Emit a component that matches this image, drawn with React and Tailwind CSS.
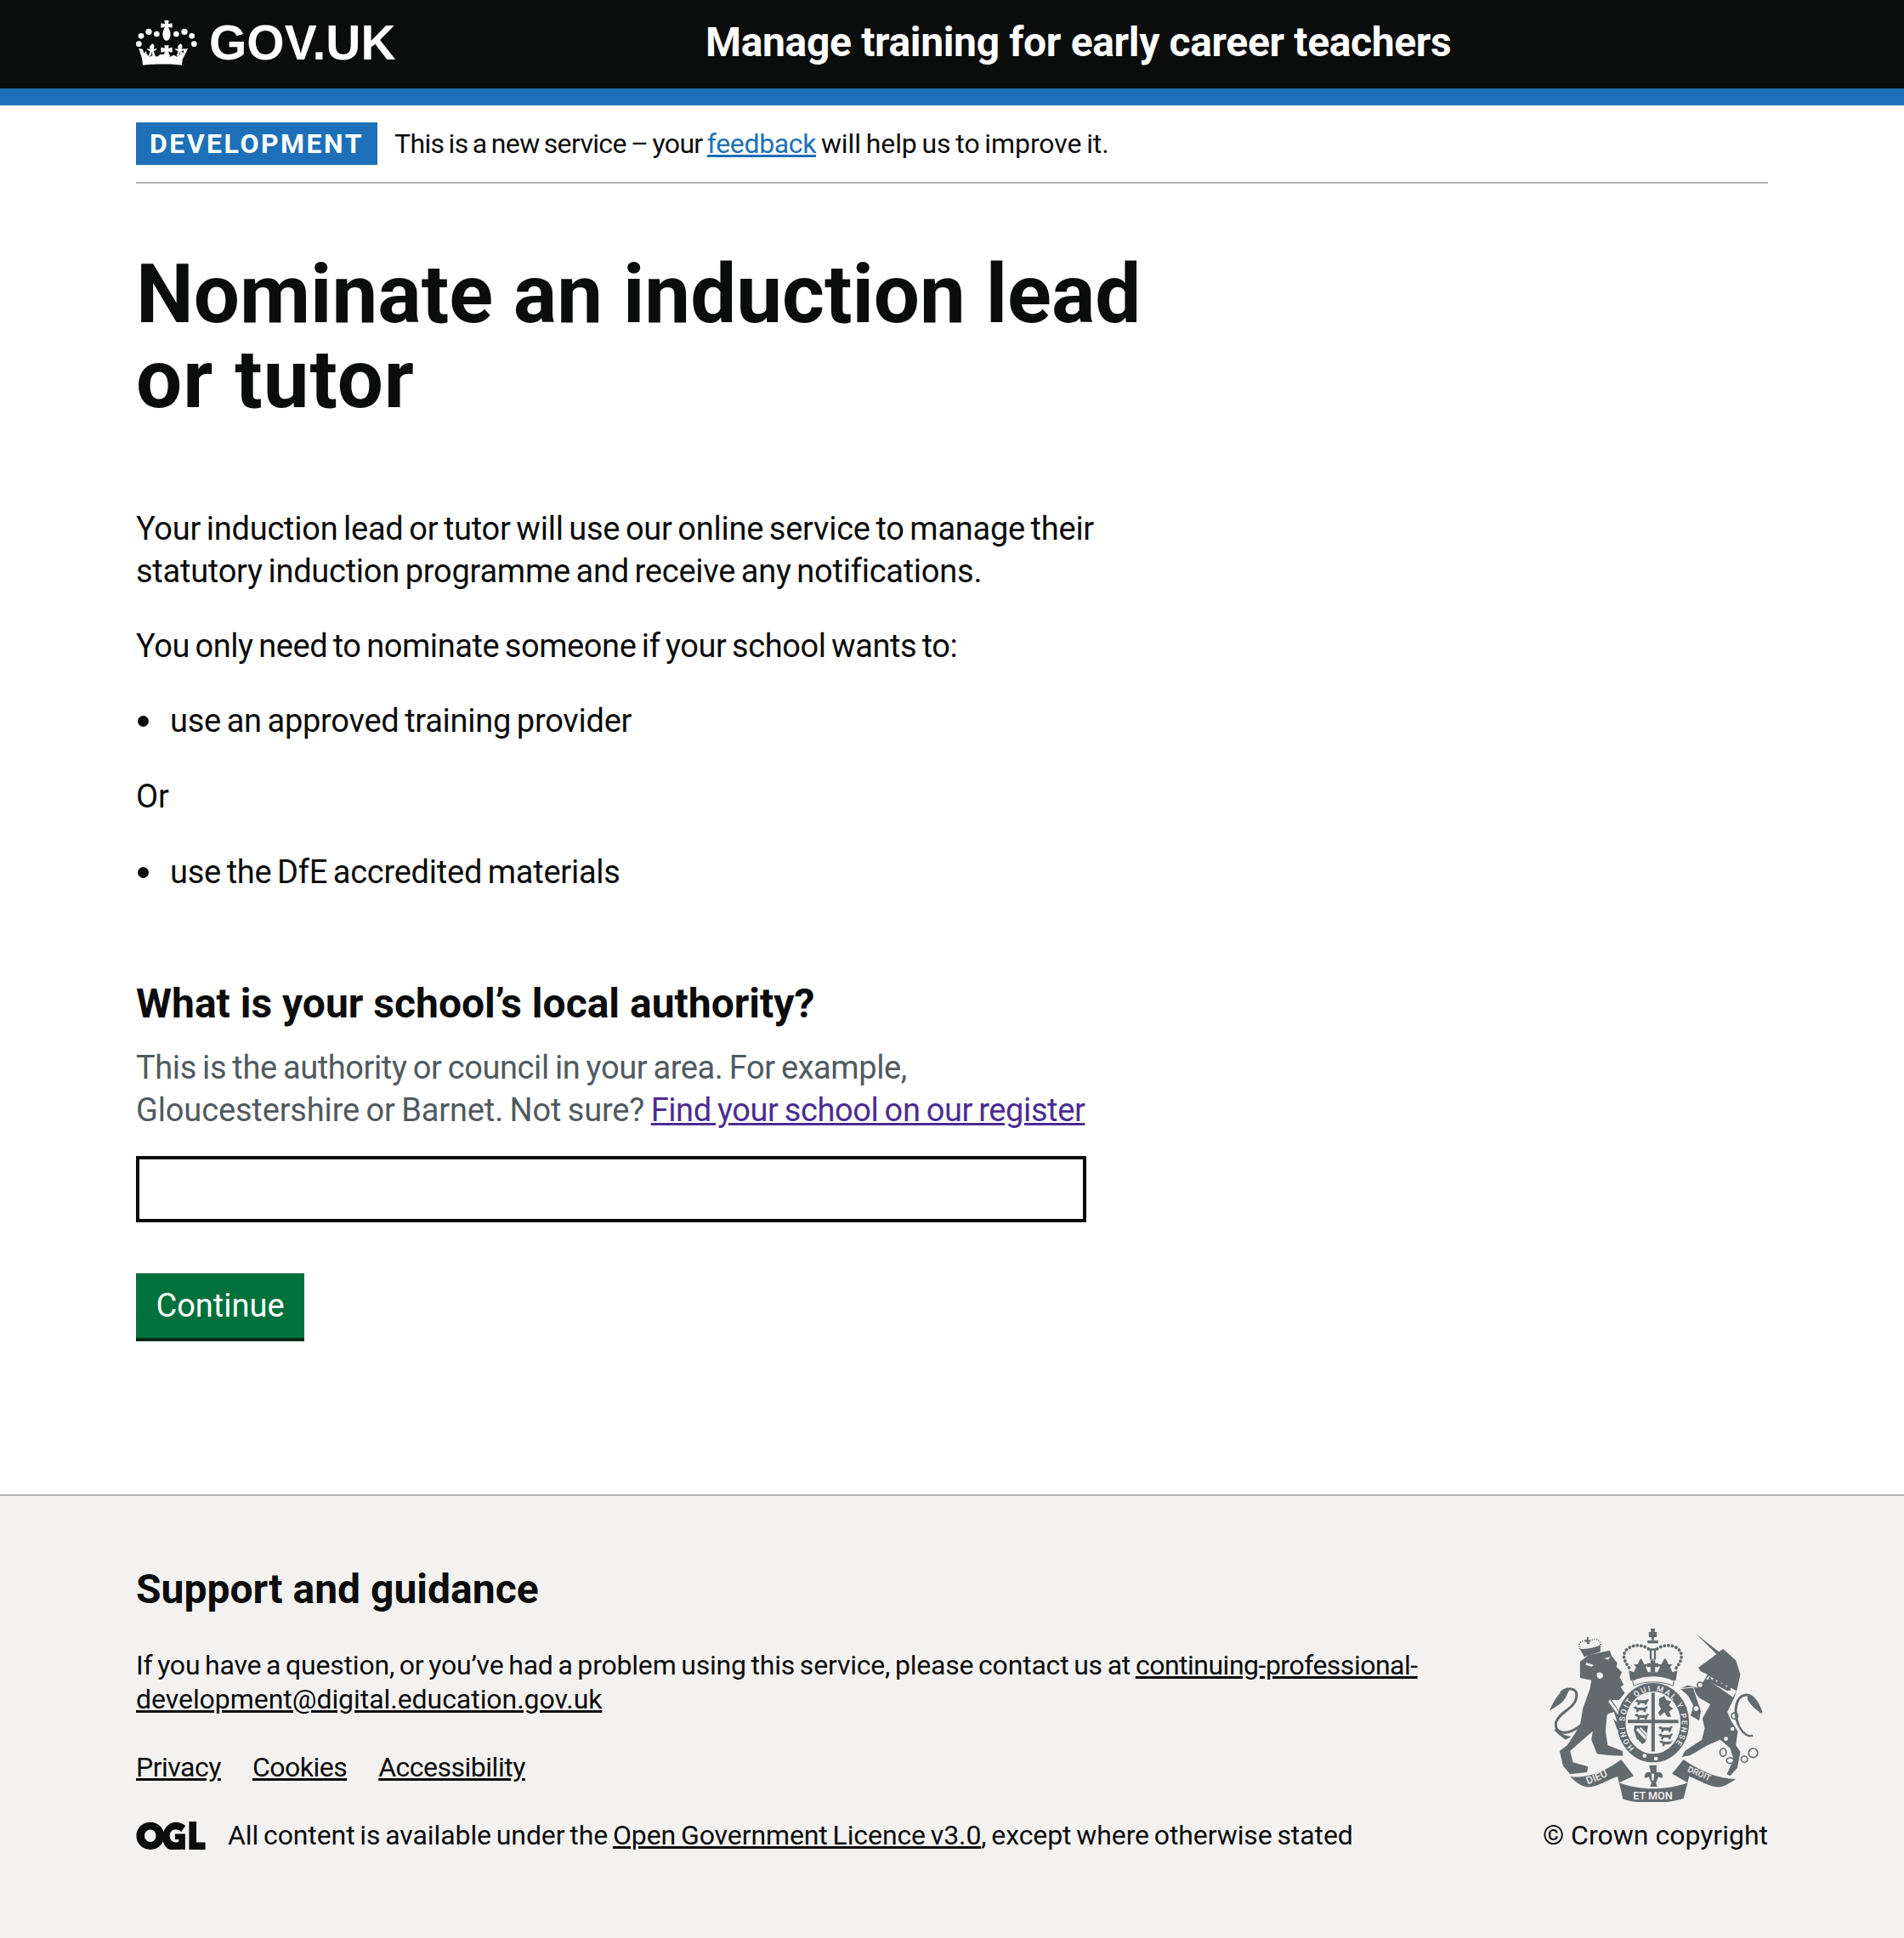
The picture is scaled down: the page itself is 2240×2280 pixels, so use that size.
import React from 'react';

const Crown = () => (
    <svg viewBox="60 70 216 159" className="w-[72px] h-[53px] shrink-0" fill="#ffffff">
        <circle cx="78" cy="125" r="10" /><circle cx="105" cy="110" r="11" /><circle cx="133" cy="118" r="10" />
        <circle cx="202" cy="118" r="10" /><circle cx="231" cy="110" r="11" /><circle cx="257" cy="125" r="10" />
        <circle cx="70" cy="153" r="10" /><circle cx="265" cy="153" r="10" />
        <path d="M160 70h16l-2 13 14-3v16l-14-3 5 12c6 12 2 36-11 36s-17-24-11-36l5-12-14 3V80l14 3z" />
        <path d="M119 150c8 8 5 14 3 20l12-3c-2 5-6 9-12 9l6 18-10-3-1-10-2 0-1 10-10 3 6-18c-6 0-10-4-12-9l12 3c-2-6-5-12 9-20z" transform="translate(0 2)" />
        <path d="M216 150c-14 8-11 14-9 20l-12-3c2 5 6 9 12 9l-6 18 10-3 1-10 2 0 1 10 10 3-6-18c6 0 10-4 12-9l-12 3c2-6 5-12-3-20z" transform="translate(2 2)" />
        <path d="M160 158h16l-2 10 14-3v18l-14-3 6 16h-24l6-16-14 3v-18l14 3z" />
        <path d="M70 168l14 4 4 14 8-8 2 12 12 8 10-6 14 6 12-8 22 0 12 8 14-6 10 6 12-8 2-12 8 8 4-14 14-4-20 40c0 8-2 14-2 20-28-5-110-5-138 0 0-6-2-12-2-20z" />
    </svg>
);

const Ogl = () => (
    <svg viewBox="60 60 246 100" className="w-[82px] h-[33px] shrink-0" fill="#0b0c0c">
        <path fillRule="evenodd" d="M110 62c28 0 49 21 49 49s-21 49-49 49-50-21-50-49 22-49 50-49zm0 27c-12 0-21 10-21 22s9 22 21 22 20-10 20-22-8-22-20-22z" />
        <path d="M200 62c14 0 26 5 35 13l-15 21c-5-5-12-8-20-8-13 0-21 10-21 23s8 23 21 23c5 0 8-1 11-3v-7h-13v-20h36v60h-6l-5-6c-7 5-15 7-24 7-27 0-46-21-46-48s20-55 47-55z" />
        <path d="M248 60h26v74h32v26h-58z" />
    </svg>
);

// small lions of the shield quarters
const Passant = ({ x, y }) => (
    <path transform={`translate(${x} ${y})`} d="M0 4l10-4 4 5h26l6-5 6 3-6 8-3 10h-6l-2-6H20l-3 6h-7l2-9-8-3z" />
);

const Arms = () => (
    <svg viewBox="130 78 755 612" className="w-[252px] h-[204px]" fill="#626a6e" stroke="none">
        {/* lion */}
        <path d="M240 195L270 172L345 155L352 175L372 200L368 212L388 232L380 250L394 275L384 285L398 305L378 330L352 330L388 385L395 420L372 436L350 375L335 385L330 440L338 490L390 510L392 527L340 525L300 520L280 470L285 440L250 470L205 510L215 550L268 565L265 585L205 592L180 562L168 510L195 490L240 420L250 360L275 290L280 260L240 252Z" />
        <path d="M242 420C190 462 150 445 155 410C165 370 228 362 228 312C228 285 190 285 172 305" fill="none" stroke="#626a6e" strokeWidth="9" />
        <path d="M205 288C170 290 150 330 132 368C160 350 180 340 190 320Z" />
        <path d="M155 432C170 448 195 460 210 458L190 470C175 462 160 448 148 436Z" />
        <path d="M300 235C320 225 330 250 312 255C300 256 298 245 300 235Z" fill="#f3f2f1" />
        <path d="M262 198l26 8-6 6-22-6z M325 182l22-4-8 10z" fill="#f3f2f1" />
        <path d="M345 328L392 392L384 396L340 336Z M335 380L360 372L372 410L350 388Z" fill="#f3f2f1" />
        {/* lion crown */}
        <path d="M240 150L255 178L312 160L312 135C295 145 270 150 240 150Z" />
        <g fill="none" stroke="#626a6e" strokeWidth="6" strokeDasharray="3 5"><path d="M240 150C228 125 255 112 272 128C282 108 318 112 312 142" /></g>
        <path d="M258 118h6v-10h6v10h6v6h-6v8h-6v-8h-6z" />
        {/* unicorn */}
        <path d="M648 95L730 160L745 150L790 190L806 240L795 290L785 320L760 372L772 402L797 440L790 490L806 512L795 570L770 598L758 592L782 540L770 500L735 470L690 490L630 525L600 531L610 510L670 470L680 430L672 395L700 345L660 322L640 295L592 290L620 278L660 288L685 250L690 240L665 228L658 215L690 192L722 168Z" />
        <path d="M685 255L780 320L792 298L695 245Z" fill="#f3f2f1" />
        <path d="M690 262l8-16 8 14 10-10 6 16 12-8 6 16 12-6 4 16 14-6 2 18-12 2-70-36z" />
        <circle cx="664" cy="277" r="10" fill="#f3f2f1" stroke="#626a6e" strokeWidth="5" />
        <circle cx="786" cy="386" r="11" fill="#f3f2f1" stroke="#626a6e" strokeWidth="5" />
        <circle cx="778" cy="432" r="7" fill="#f3f2f1" /><circle cx="755" cy="467" r="7" fill="#f3f2f1" />
        <g fill="none" stroke="#626a6e" strokeWidth="5">
            <ellipse cx="745" cy="515" rx="11" ry="14" /><ellipse cx="770" cy="544" rx="13" ry="10" />
            <ellipse cx="820" cy="539" rx="11" ry="11" /><circle cx="851" cy="517" r="16" />
            <path d="M800 420C780 370 790 315 825 312C850 310 870 345 880 375" strokeWidth="9" />
            <path d="M800 420C815 450 835 462 850 455" strokeWidth="7" />
        </g>
        <path d="M830 308C860 312 870 345 882 378C860 365 840 345 832 330Z" />
        {/* crown */}
        <g>
            <path d="M483 90h8l-2-12h16l-2 12h8v18h-10v14h-8v-14h-10z" />
            <path d="M478 130h38v-10h-38z" />
            <rect x="486" y="148" width="22" height="40" />
            <rect x="493" y="155" width="8" height="30" fill="#f3f2f1" />
            <g fill="none" stroke="#626a6e" strokeWidth="11" strokeDasharray="1 13" strokeLinecap="round">
                <path d="M482 150C450 125 395 140 395 175C395 190 405 205 418 222" />
                <path d="M512 150C545 125 598 140 598 175C598 190 590 205 575 222" />
            </g>
            <path d="M412 226L430 232L438 214L430 204L444 204L448 194L455 182L462 194L466 204L480 204L472 214L480 232L514 232L522 214L514 204L528 204L532 194L540 182L548 194L552 204L566 204L558 214L566 232L584 226L578 262C540 250 455 250 418 262Z" />
            <path d="M489 190h16v10h12v14h-12v18h-16v-18h-12v-14h12z" />
            <path d="M425 262C465 240 530 240 572 262L568 280C530 262 465 262 430 280Z" fill="#f3f2f1" stroke="#626a6e" strokeWidth="3" />
        </g>
        {/* garter and shield */}
        <ellipse cx="498" cy="410" rx="112" ry="125" fill="#f3f2f1" stroke="#626a6e" strokeWidth="30" />
        <defs>
            <path id="garter-ring" d="M432 500A101 115 0 1 1 564 500" />
            <path id="ribbon-left" d="M268 628C300 615 340 600 372 578" />
            <path id="ribbon-right" d="M618 582C650 594 695 618 735 632" />
            <clipPath id="shield-clip"><ellipse cx="498" cy="408" rx="90" ry="104" /></clipPath>
        </defs>
        <g clipPath="url(#shield-clip)">
            <path d="M492 303H504V520H492Z M408 400H588V412H408Z" />
            <Passant x={432} y={326} /><Passant x={428} y={352} /><Passant x={432} y={378} />
            <Passant x={516} y={422} /><Passant x={516} y={448} /><Passant x={520} y={472} />
            <path d="M520 325l18-10 6 14 18 6-8 14 14 12-14 10 8 18h-14l-10-16-16 14-6-12 10-14-8-14z" />
            <path d="M432 420h48l-8 58-12 8-20-20-10-30z" />
            <path d="M444 428l30 32-4 10-32-34zM454 426l22 22-2 8-24-26z" fill="#f3f2f1" />
        </g>
        <text fill="#f3f2f1" fontFamily="Roboto, sans-serif" fontWeight="500" fontSize="27"><textPath href="#garter-ring" textLength="510" lengthAdjust="spacing">HONI SOIT QUI MAL Y PENSE</textPath></text>
        <path d="M430 510C470 528 525 532 565 510L555 530C520 552 475 552 440 530Z" />
        <circle cx="468" cy="527" r="7" fill="#f3f2f1" /><circle cx="508" cy="537" r="7" fill="#f3f2f1" />
        {/* unicorn fore leg over the garter */}
        <path d="M592 290L640 285L668 370L662 405L628 385L640 352L620 315Z" stroke="#f3f2f1" strokeWidth="3" />
        <circle cx="650" cy="360" r="11" fill="#f3f2f1" stroke="#626a6e" strokeWidth="5" />
        {/* motto ribbon */}
        <path d="M205 600C270 610 340 575 385 540L430 598L378 622L372 600C340 610 300 640 262 637C240 632 220 615 205 600Z" />
        <path d="M378 622C450 650 545 650 620 622L605 678C540 698 455 698 392 680Z" />
        <path d="M790 608C725 610 655 575 605 540L565 590L620 622L625 600C660 612 700 640 735 637C755 632 775 620 790 608Z" />
        <text fill="#f3f2f1" fontFamily="Roboto, sans-serif" fontWeight="500" fontSize="36"><textPath href="#ribbon-left">DIEU</textPath></text>
        <text fill="#f3f2f1" fontFamily="Roboto, sans-serif" fontWeight="500" fontSize="30"><textPath href="#ribbon-right">DROIT</textPath></text>
        <text x="497" y="680" textAnchor="middle" fill="#f3f2f1" fontFamily="Roboto, sans-serif" fontWeight="500" fontSize="38">ET MON</text>
        <path d="M484 560h26v26c12-6 24 4 22 18-6 2-10 0-14-4l-10 22 4 14h-24l4-14-10-22c-4 4-8 6-14 4-2-14 10-24 22-18z" />
        <path d="M492 590h10l-2 24h-6z" fill="#f3f2f1" />
    </svg>
);

const App = () => {
    return (
        <div className="min-h-[2280px] bg-white font-['Roboto',sans-serif] text-[#0b0c0c]">
            <header className="bg-[#0b0c0c] border-b-[20px] border-[#1d70b8]">
                <div className="w-[1920px] mx-auto h-[104px] flex items-center">
                    <div className="w-[670px] flex items-center gap-[14px] -mt-1">
                        <Crown />
                        <span className="font-['Liberation_Sans',sans-serif] font-bold text-[57px] leading-none text-white">GOV.UK</span>
                    </div>
                    <span className="font-bold text-[48px] leading-none text-white -mt-1 tracking-[-0.35px]">Manage training for early career teachers</span>
                </div>
            </header>

            <main className="w-[1920px] mx-auto">
                <div className="h-[92px] border-b-2 border-[#b1b4b6] flex items-start pt-5">
                    <span className="h-[50px] w-[284px] bg-[#1d70b8] text-white font-bold text-[32px] tracking-[2.5px] flex items-center justify-center">DEVELOPMENT</span>
                    <p className="ml-5 text-[32px] leading-[50px] tracking-[-0.1px] [word-spacing:-2px]">
                        <span className="tracking-[-0.67px]">This is a new service – your </span>
                        <a href="#" className="underline text-[#1d70b8] tracking-[-0.35px]">feedback</a> will help us to improve it.
                    </p>
                </div>

                <h1 className="mt-[80px] font-bold text-[96px] leading-[100px]">Nominate an induction lead<br /><span className="tracking-[1px]">or tutor</span></h1>

                <div className="mt-[101px] w-[1280px] text-[38px] leading-[50px] tracking-[-0.25px] [word-spacing:-2.5px]">
                    <p>Your induction lead or tutor will use our online service to manage their<br />statutory induction programme and receive any notifications.</p>
                    <p className="mt-[38px] tracking-[-0.42px]">You only need to nominate someone if your school wants to:</p>
                    <ul className="mt-[38px]">
                        <li className="flex items-center">
                            <span className="w-[13px] h-[13px] rounded-full bg-[#0b0c0c] ml-[2px] mr-[25px]" />
                            use an approved training provider
                        </li>
                    </ul>
                    <p className="mt-[39px]">Or</p>
                    <ul className="mt-[39px]">
                        <li className="flex items-center">
                            <span className="w-[13px] h-[13px] rounded-full bg-[#0b0c0c] ml-[2px] mr-[25px]" />
                            use the DfE accredited materials
                        </li>
                    </ul>
                </div>

                <h2 className="mt-[100px] font-bold text-[48px] leading-[60px]">What is your school’s local authority?</h2>
                <p className="mt-[20px] text-[38px] leading-[50px] text-[#505a5f] tracking-[-0.15px] [word-spacing:-1.8px]">
                    <span className="tracking-[-0.4px]">This is the authority or council in your area. For example,</span><br />
                    Gloucestershire or Barnet. Not sure? <a href="#" className="underline text-[#4c2c92] tracking-[-0.4px]">Find your school on our register</a>
                </p>
                <input type="text" className="block mt-[29px] w-[1118px] h-[78px] border-4 border-[#0b0c0c] bg-white outline-none" />
                <button className="block mt-[60px] w-[198px] h-[80px] bg-[#00703c] border-b-4 border-[#002d18] text-white text-[38px] leading-none">Continue</button>
            </main>

            <footer className="mt-[180px] h-[523px] bg-[#f3f2f1] border-t-2 border-[#b1b4b6]">
                <div className="w-[1920px] mx-auto pt-[80px] flex justify-between">
                    <div className="w-[1540px]">
                        <h2 className="font-bold text-[48px] leading-[60px]">Support and guidance</h2>
                        <p className="mt-[39px] text-[32px] leading-[40px] tracking-[-0.2px] [word-spacing:-2px]">
                            If you have a question, or you’ve had a problem using this service, please contact us at <a href="#" className="underline"><span className="tracking-[-0.5px]">continuing-professional-</span><span className="tracking-[-0.05px]">development@digital.education.gov.uk</span></a>
                        </p>
                        <ul className="mt-[40px] flex gap-[37px] text-[32px] leading-[40px] tracking-[-0.5px]">
                            <li><a href="#" className="underline">Privacy</a></li>
                            <li><a href="#" className="underline">Cookies</a></li>
                            <li><a href="#" className="underline">Accessibility</a></li>
                        </ul>
                        <div className="mt-[40px] flex items-center gap-[26px] text-[32px] leading-[40px] tracking-[-0.1px] [word-spacing:-2px]">
                            <Ogl />
                            <span>All content is available under the <a href="#" className="underline">Open Government Licence v3.0</a>, except where otherwise stated</span>
                        </div>
                    </div>
                    <div className="flex flex-col items-center mt-[76px]">
                        <Arms />
                        <a href="#" className="mt-[19px] text-[32px] leading-[40px]">© Crown copyright</a>
                    </div>
                </div>
            </footer>
        </div>
    );
};

export default App;
